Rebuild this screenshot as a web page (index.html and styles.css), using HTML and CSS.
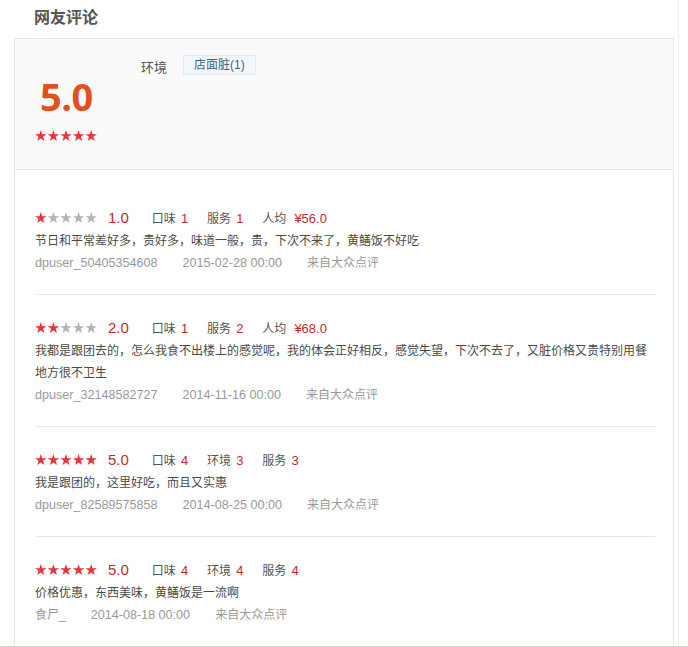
FILE: index.html
```html
<!DOCTYPE html>
<html lang="zh-CN">
<head>
<meta charset="utf-8">
<title>网友评论</title>
<link rel="stylesheet" href="styles.css">
</head>
<body>
<svg class="defs" width="0" height="0" aria-hidden="true">
  <symbol id="st" viewBox="0 0 24 22.83">
    <polygon points="12,0 14.83,8.72 24,8.72 16.58,14.11 19.42,22.83 12,17.44 4.58,22.83 7.42,14.11 0,8.72 9.17,8.72"/>
  </symbol>
</svg>
<div class="page">
  <div class="col">
    <h2 class="title">网友评论</h2>
    <div class="box">
      <div class="summary">
        <div class="overall">
          <div class="big">5.0</div>
          <svg class="stars" width="63" height="11" viewBox="0 0 63 11"><use href="#st" class="on" x="0" width="11.6" height="11"/><use href="#st" class="on" x="12.6" width="11.6" height="11"/><use href="#st" class="on" x="25.2" width="11.6" height="11"/><use href="#st" class="on" x="37.8" width="11.6" height="11"/><use href="#st" class="on" x="50.4" width="11.6" height="11"/></svg>
        </div>
        <div class="tags">
          <span class="tag-label">环境</span>
          <span class="tag">店面脏(1)</span>
        </div>
      </div>
      <div class="list">
        <div class="item">
          <div class="row">
            <svg class="stars" width="63" height="11" viewBox="0 0 63 11"><use href="#st" class="on" x="0" width="11.6" height="11"/><use href="#st" class="off" x="12.6" width="11.6" height="11"/><use href="#st" class="off" x="25.2" width="11.6" height="11"/><use href="#st" class="off" x="37.8" width="11.6" height="11"/><use href="#st" class="off" x="50.4" width="11.6" height="11"/></svg>
            <span class="rate">1.0</span>
            <span class="sc">口味<em>1</em></span>
            <span class="sc">服务<em>1</em></span>
            <span class="sc">人均<em class="price">¥56.0</em></span>
          </div>
          <p class="text">节日和平常差好多，贵好多，味道一般，贵，下次不来了，黄鳝饭不好吃</p>
          <div class="meta"><span class="user">dpuser_50405354608</span><span class="date">2015-02-28 00:00</span><span class="src">来自大众点评</span></div>
        </div>
        <div class="item">
          <div class="row">
            <svg class="stars" width="63" height="11" viewBox="0 0 63 11"><use href="#st" class="on" x="0" width="11.6" height="11"/><use href="#st" class="on" x="12.6" width="11.6" height="11"/><use href="#st" class="off" x="25.2" width="11.6" height="11"/><use href="#st" class="off" x="37.8" width="11.6" height="11"/><use href="#st" class="off" x="50.4" width="11.6" height="11"/></svg>
            <span class="rate">2.0</span>
            <span class="sc">口味<em>1</em></span>
            <span class="sc">服务<em>2</em></span>
            <span class="sc">人均<em class="price">¥68.0</em></span>
          </div>
          <p class="text">我都是跟团去的，怎么我食不出楼上的感觉呢，我的体会正好相反，感觉失望，下次不去了，又脏价格又贵特别用餐地方很不卫生</p>
          <div class="meta"><span class="user">dpuser_32148582727</span><span class="date">2014-11-16 00:00</span><span class="src">来自大众点评</span></div>
        </div>
        <div class="item">
          <div class="row">
            <svg class="stars" width="63" height="11" viewBox="0 0 63 11"><use href="#st" class="on" x="0" width="11.6" height="11"/><use href="#st" class="on" x="12.6" width="11.6" height="11"/><use href="#st" class="on" x="25.2" width="11.6" height="11"/><use href="#st" class="on" x="37.8" width="11.6" height="11"/><use href="#st" class="on" x="50.4" width="11.6" height="11"/></svg>
            <span class="rate">5.0</span>
            <span class="sc">口味<em>4</em></span>
            <span class="sc">环境<em>3</em></span>
            <span class="sc">服务<em>3</em></span>
          </div>
          <p class="text">我是跟团的，这里好吃，而且又实惠</p>
          <div class="meta"><span class="user">dpuser_82589575858</span><span class="date">2014-08-25 00:00</span><span class="src">来自大众点评</span></div>
        </div>
        <div class="item">
          <div class="row">
            <svg class="stars" width="63" height="11" viewBox="0 0 63 11"><use href="#st" class="on" x="0" width="11.6" height="11"/><use href="#st" class="on" x="12.6" width="11.6" height="11"/><use href="#st" class="on" x="25.2" width="11.6" height="11"/><use href="#st" class="on" x="37.8" width="11.6" height="11"/><use href="#st" class="on" x="50.4" width="11.6" height="11"/></svg>
            <span class="rate">5.0</span>
            <span class="sc">口味<em>4</em></span>
            <span class="sc">环境<em>4</em></span>
            <span class="sc">服务<em>4</em></span>
          </div>
          <p class="text">价格优惠，东西美味，黄鳝饭是一流啊</p>
          <div class="meta"><span class="user cjk">食尸_</span><span class="date">2014-08-18 00:00</span><span class="src">来自大众点评</span></div>
        </div>
      </div>
    </div>
  </div>
</div>
</body>
</html>
```

FILE: styles.css
```css
* { box-sizing: border-box; }
html, body { margin: 0; padding: 0; background: #fff; }
body {
  font-family: "Liberation Sans", "Noto Sans CJK SC", sans-serif;
  font-size: 12px;
  color: #555;
}
.defs { position: absolute; width: 0; height: 0; overflow: hidden; }

.page {
  height: 647px;
  border-bottom: 1px solid #d6d6cf;
}
.col {
  width: 679px;
  height: 646px;
  border-right: 1px solid #f0f0f0;
  padding-left: 14px;
}
.title {
  margin: 0;
  height: 38px;
  line-height: 36px;
  padding-left: 20px;
  font-size: 16px;
  font-weight: bold;
  color: #555;
}
.box {
  width: 660px;
  border: 1px solid #e6e6e6;
  border-bottom: 0;
}

.summary {
  display: flex;
  height: 131px;
  padding: 16px 20px 0;
  background: #fafafa;
  border-bottom: 1px solid #e8e8e8;
}
.overall {
  width: 106px;
  padding-top: 21px;
  display: flex;
  flex-direction: column;
}
.big {
  font-family: "Open Sans", "Liberation Sans", sans-serif;
  font-weight: bold;
  font-size: 38px;
  line-height: 40px;
  color: #e54f1d;
  padding-left: 5px;
  letter-spacing: -0.5px;
}
.overall .stars { margin-top: 14px; }
.stars { display: block; flex: none; }
.stars .on { fill: #e4353b; }
.stars .off { fill: #b4b4b4; }

.tags {
  display: flex;
  align-items: center;
  height: 20px;
}
.tag-label {
  font-size: 13px;
  color: #555;
  margin-right: 16px;
  padding-top: 3px;
}
.tag {
  display: inline-block;
  height: 20px;
  line-height: 18px;
  padding: 0 10px;
  background: #f1f7fa;
  border: 1px solid #e0ecf2;
  color: #48647a;
  font-size: 12px;
}

.list {
  padding: 15px 18px 0 20px;
}
.item {
  padding: 20px 0 20px;
  border-bottom: 1px solid #e8e8e8;
}
.item:last-child { border-bottom: 0; }
.row {
  display: flex;
  align-items: center;
  height: 24px;
  margin-bottom: 1px;
}
.rate {
  margin-left: 10px;
  margin-right: 23px;
  font-size: 15px;
  color: #c4282e;
}
.sc {
  font-size: 12px;
  color: #555;
  margin-right: 19px;
}
.sc em {
  font-style: normal;
  font-size: 13px;
  color: #c4282e;
  margin-left: 5px;
}
.sc em.price { margin-left: 8px; }
.text {
  margin: 0;
  font-size: 12px;
  line-height: 22px;
  color: #4a4a4a;
}
.meta {
  display: flex;
  height: 22px;
  line-height: 22px;
  color: #999;
  font-size: 12.6px;
}
.meta span { margin-right: 25px; }
.meta .src, .meta .cjk { font-size: 12px; }
```
